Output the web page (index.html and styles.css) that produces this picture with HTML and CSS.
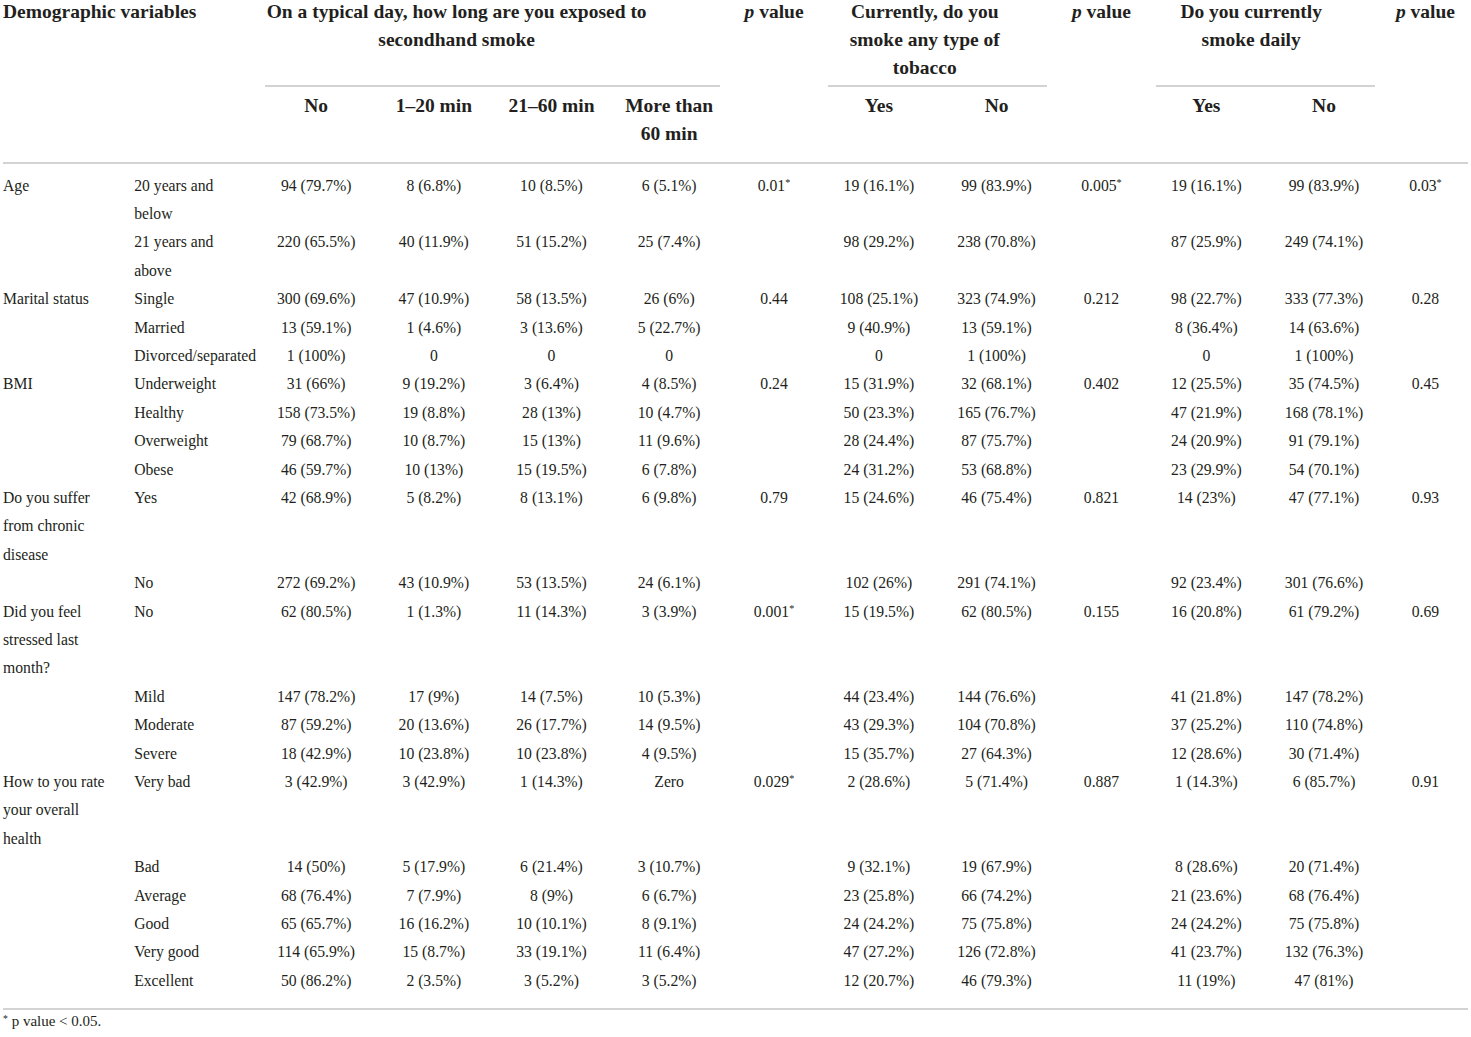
FILE: index.html
```html
<!DOCTYPE html>
<html lang="en">
<head>
<meta charset="utf-8">
<title>Table</title>
<link rel="stylesheet" href="styles.css">
</head>
<body>
<div class="page">
<table class="data">
  <colgroup>
    <col class="c-var"><col class="c-sub">
    <col class="c-n"><col class="c-n"><col class="c-n"><col class="c-n">
    <col class="c-p">
    <col class="c-n"><col class="c-n">
    <col class="c-p">
    <col class="c-n"><col class="c-n">
    <col class="c-last">
  </colgroup>
  <thead>
    <tr class="h1">
      <th class="left" colspan="2" rowspan="2">Demographic variables</th>
      <th class="group g1" colspan="4">On a typical day, how long are you exposed to<br>secondhand smoke</th>
      <th rowspan="2"><em>p</em> value</th>
      <th class="group g2" colspan="2">Currently, do you<br>smoke any type of<br>tobacco</th>
      <th rowspan="2"><em>p</em> value</th>
      <th class="group g3" colspan="2">Do you currently<br>smoke daily</th>
      <th rowspan="2"><em>p</em> value</th>
    </tr>
    <tr class="h2">
      <th>No</th><th>1–20 min</th><th>21–60 min</th><th>More than<br>60 min</th>
      <th>Yes</th><th>No</th>
      <th>Yes</th><th>No</th>
    </tr>
  </thead>
  <tbody>
    <tr><td class="left">Age</td><td class="left">20 years and<br>below</td><td>94 (79.7%)</td><td>8 (6.8%)</td><td>10 (8.5%)</td><td>6 (5.1%)</td><td>0.01<sup>*</sup></td><td>19 (16.1%)</td><td>99 (83.9%)</td><td>0.005<sup>*</sup></td><td>19 (16.1%)</td><td>99 (83.9%)</td><td>0.03<sup>*</sup></td></tr>
    <tr><td class="left"></td><td class="left">21 years and<br>above</td><td>220 (65.5%)</td><td>40 (11.9%)</td><td>51 (15.2%)</td><td>25 (7.4%)</td><td></td><td>98 (29.2%)</td><td>238 (70.8%)</td><td></td><td>87 (25.9%)</td><td>249 (74.1%)</td><td></td></tr>
    <tr><td class="left">Marital status</td><td class="left">Single</td><td>300 (69.6%)</td><td>47 (10.9%)</td><td>58 (13.5%)</td><td>26 (6%)</td><td>0.44</td><td>108 (25.1%)</td><td>323 (74.9%)</td><td>0.212</td><td>98 (22.7%)</td><td>333 (77.3%)</td><td>0.28</td></tr>
    <tr><td class="left"></td><td class="left">Married</td><td>13 (59.1%)</td><td>1 (4.6%)</td><td>3 (13.6%)</td><td>5 (22.7%)</td><td></td><td>9 (40.9%)</td><td>13 (59.1%)</td><td></td><td>8 (36.4%)</td><td>14 (63.6%)</td><td></td></tr>
    <tr><td class="left"></td><td class="left">Divorced/separated</td><td>1 (100%)</td><td>0</td><td>0</td><td>0</td><td></td><td>0</td><td>1 (100%)</td><td></td><td>0</td><td>1 (100%)</td><td></td></tr>
    <tr><td class="left">BMI</td><td class="left">Underweight</td><td>31 (66%)</td><td>9 (19.2%)</td><td>3 (6.4%)</td><td>4 (8.5%)</td><td>0.24</td><td>15 (31.9%)</td><td>32 (68.1%)</td><td>0.402</td><td>12 (25.5%)</td><td>35 (74.5%)</td><td>0.45</td></tr>
    <tr><td class="left"></td><td class="left">Healthy</td><td>158 (73.5%)</td><td>19 (8.8%)</td><td>28 (13%)</td><td>10 (4.7%)</td><td></td><td>50 (23.3%)</td><td>165 (76.7%)</td><td></td><td>47 (21.9%)</td><td>168 (78.1%)</td><td></td></tr>
    <tr><td class="left"></td><td class="left">Overweight</td><td>79 (68.7%)</td><td>10 (8.7%)</td><td>15 (13%)</td><td>11 (9.6%)</td><td></td><td>28 (24.4%)</td><td>87 (75.7%)</td><td></td><td>24 (20.9%)</td><td>91 (79.1%)</td><td></td></tr>
    <tr><td class="left"></td><td class="left">Obese</td><td>46 (59.7%)</td><td>10 (13%)</td><td>15 (19.5%)</td><td>6 (7.8%)</td><td></td><td>24 (31.2%)</td><td>53 (68.8%)</td><td></td><td>23 (29.9%)</td><td>54 (70.1%)</td><td></td></tr>
    <tr><td class="left">Do you suffer<br>from chronic<br>disease</td><td class="left">Yes</td><td>42 (68.9%)</td><td>5 (8.2%)</td><td>8 (13.1%)</td><td>6 (9.8%)</td><td>0.79</td><td>15 (24.6%)</td><td>46 (75.4%)</td><td>0.821</td><td>14 (23%)</td><td>47 (77.1%)</td><td>0.93</td></tr>
    <tr><td class="left"></td><td class="left">No</td><td>272 (69.2%)</td><td>43 (10.9%)</td><td>53 (13.5%)</td><td>24 (6.1%)</td><td></td><td>102 (26%)</td><td>291 (74.1%)</td><td></td><td>92 (23.4%)</td><td>301 (76.6%)</td><td></td></tr>
    <tr><td class="left">Did you feel<br>stressed last<br>month?</td><td class="left">No</td><td>62 (80.5%)</td><td>1 (1.3%)</td><td>11 (14.3%)</td><td>3 (3.9%)</td><td>0.001<sup>*</sup></td><td>15 (19.5%)</td><td>62 (80.5%)</td><td>0.155</td><td>16 (20.8%)</td><td>61 (79.2%)</td><td>0.69</td></tr>
    <tr><td class="left"></td><td class="left">Mild</td><td>147 (78.2%)</td><td>17 (9%)</td><td>14 (7.5%)</td><td>10 (5.3%)</td><td></td><td>44 (23.4%)</td><td>144 (76.6%)</td><td></td><td>41 (21.8%)</td><td>147 (78.2%)</td><td></td></tr>
    <tr><td class="left"></td><td class="left">Moderate</td><td>87 (59.2%)</td><td>20 (13.6%)</td><td>26 (17.7%)</td><td>14 (9.5%)</td><td></td><td>43 (29.3%)</td><td>104 (70.8%)</td><td></td><td>37 (25.2%)</td><td>110 (74.8%)</td><td></td></tr>
    <tr><td class="left"></td><td class="left">Severe</td><td>18 (42.9%)</td><td>10 (23.8%)</td><td>10 (23.8%)</td><td>4 (9.5%)</td><td></td><td>15 (35.7%)</td><td>27 (64.3%)</td><td></td><td>12 (28.6%)</td><td>30 (71.4%)</td><td></td></tr>
    <tr><td class="left">How to you rate<br>your overall<br>health</td><td class="left">Very bad</td><td>3 (42.9%)</td><td>3 (42.9%)</td><td>1 (14.3%)</td><td>Zero</td><td>0.029<sup>*</sup></td><td>2 (28.6%)</td><td>5 (71.4%)</td><td>0.887</td><td>1 (14.3%)</td><td>6 (85.7%)</td><td>0.91</td></tr>
    <tr><td class="left"></td><td class="left">Bad</td><td>14 (50%)</td><td>5 (17.9%)</td><td>6 (21.4%)</td><td>3 (10.7%)</td><td></td><td>9 (32.1%)</td><td>19 (67.9%)</td><td></td><td>8 (28.6%)</td><td>20 (71.4%)</td><td></td></tr>
    <tr><td class="left"></td><td class="left">Average</td><td>68 (76.4%)</td><td>7 (7.9%)</td><td>8 (9%)</td><td>6 (6.7%)</td><td></td><td>23 (25.8%)</td><td>66 (74.2%)</td><td></td><td>21 (23.6%)</td><td>68 (76.4%)</td><td></td></tr>
    <tr><td class="left"></td><td class="left">Good</td><td>65 (65.7%)</td><td>16 (16.2%)</td><td>10 (10.1%)</td><td>8 (9.1%)</td><td></td><td>24 (24.2%)</td><td>75 (75.8%)</td><td></td><td>24 (24.2%)</td><td>75 (75.8%)</td><td></td></tr>
    <tr><td class="left"></td><td class="left">Very good</td><td>114 (65.9%)</td><td>15 (8.7%)</td><td>33 (19.1%)</td><td>11 (6.4%)</td><td></td><td>47 (27.2%)</td><td>126 (72.8%)</td><td></td><td>41 (23.7%)</td><td>132 (76.3%)</td><td></td></tr>
    <tr><td class="left"></td><td class="left">Excellent</td><td>50 (86.2%)</td><td>2 (3.5%)</td><td>3 (5.2%)</td><td>3 (5.2%)</td><td></td><td>12 (20.7%)</td><td>46 (79.3%)</td><td></td><td>11 (19%)</td><td>47 (81%)</td><td></td></tr>
  </tbody>
</table>
<p class="note"><sup>*</sup> p value &lt; 0.05.</p>
</div>
</body>
</html>
```

FILE: styles.css
```css
html, body {
  margin: 0;
  padding: 0;
  background: #ffffff;
}

.page {
  padding: 0 3px;
  font-family: "Liberation Serif", "Times New Roman", serif;
  color: #231f20;
}

.data {
  width: 1465px;
  table-layout: fixed;
  border-collapse: collapse;
  margin-top: -2px;
  font-size: 15.7px;
}

.c-var { width: 131px; }
.c-sub { width: 123px; }
.c-n { width: 117.5px; }
.c-p { width: 92px; }
.c-last { width: 85px; }

.data th {
  font-weight: bold;
  font-size: 19.5px;
  line-height: 28px;
  text-align: center;
  vertical-align: top;
  padding: 0;
  white-space: nowrap;
}

.data th em {
  font-style: italic;
}

.data .left {
  text-align: left;
}

.h1 th {
  padding-bottom: 5px;
}

.h1 .group {
  background-image: linear-gradient(#d3d3d3, #d3d3d3);
  background-repeat: no-repeat;
  background-size: calc(100% - 16px) 2px;
  background-position: 8px 100%;
}

.h1 .g1 { padding-right: 72px; }
.h1 .g2 { padding-right: 26px; }
.h1 .g3 { padding-right: 28px; }

.h2 th {
  padding-top: 5px;
  padding-bottom: 14px;
}

thead {
  border-bottom: 2px solid #d3d3d3;
}

tbody {
  border-bottom: 2px solid #d3d3d3;
}

.data td {
  line-height: 28.4px;
  text-align: center;
  vertical-align: top;
  padding: 0;
  white-space: nowrap;
}

tbody tr:first-child td {
  padding-top: 7.5px;
}

tbody tr:last-child td {
  padding-bottom: 13px;
}

sup {
  font-size: 0.65em;
  line-height: 0;
  vertical-align: 0.45em;
}

.note {
  margin: 0;
  padding-top: 3px;
  font-size: 15px;
  line-height: 17px;
}
```
